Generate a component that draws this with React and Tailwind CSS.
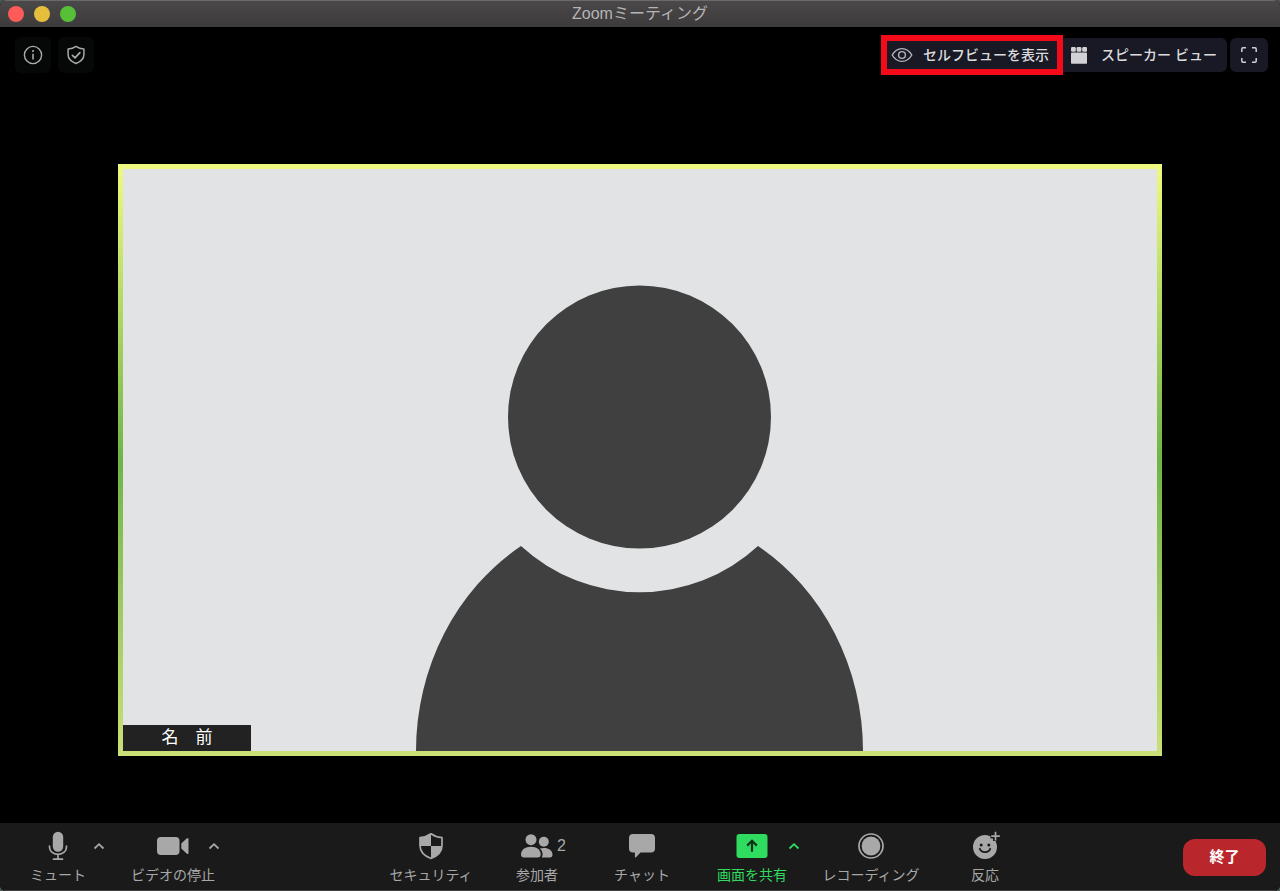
import React from "react";

const InfoIcon = () => (
    <svg width="20" height="20" viewBox="0 0 20 20" fill="none" stroke="#a9aaaa" strokeWidth="1.4" aria-hidden="true">
        <circle cx="10" cy="10" r="8.6" />
        <circle cx="10" cy="6" r="1.1" fill="#a9aaaa" stroke="none" />
        <path d="M10 8.8v5.6" strokeWidth="1.6" />
    </svg>
)

const ShieldCheckIcon = () => (
    <svg width="20" height="20" viewBox="0 0 20 20" fill="none" stroke="#a9aaaa" strokeWidth="1.5" strokeLinejoin="round" strokeLinecap="round" aria-hidden="true">
        <path d="M10 1.4C7.8 3 5.2 3.9 2.1 4v5.5c0 4.2 3.3 7.3 7.9 9 4.6-1.7 7.9-4.8 7.9-9V4C14.8 3.9 12.2 3 10 1.4z" />
        <path d="M6.4 10.3l2.6 2.5 4.9-5.2" strokeWidth="1.7" />
    </svg>
)

const EyeIcon = () => (
    <svg width="22" height="16" viewBox="0 0 22 16" fill="none" stroke="#b5b6bb" strokeWidth="1.4" aria-hidden="true">
        <path d="M1.2 8C3.6 3.8 7 1.6 11 1.6S18.400 3.8 20.8 8C18.4 12.2 15 14.4 11 14.4S3.6 12.2 1.2 8z" />
        <circle cx="11" cy="8" r="3.4" />
    </svg>
)

const SpeakerViewIcon = () => (
    <svg width="16" height="17" viewBox="0 0 16 17" fill="#d2d2d4" aria-hidden="true">
        <rect x="0" y="0" width="4.8" height="4.8" rx="1.2" />
        <rect x="5.6" y="0" width="4.8" height="4.8" rx="1.2" />
        <rect x="11.2" y="0" width="4.8" height="4.8" rx="1.2" />
        <rect x="0" y="5.6" width="16" height="11.2" rx="0.8" />
    </svg>
)

const FullscreenIcon = () => (
    <svg width="16" height="16" viewBox="0 0 16 16" fill="none" stroke="#cfcfd2" strokeWidth="1.5" aria-hidden="true">
        <path d="M0.800 5V2Q0.8 0.8 2 0.8H5M11 0.8h3q1.2 0 1.2 1.2v3M15.2 11v3q0 1.2-1.2 1.2h-3M5 15.2H2Q0.8 15.2 0.8 14v-3" />
    </svg>
)

const MicIcon = () => (
    <svg width="20" height="30" viewBox="0 0 20 30" fill="none" stroke="#a8a8a8" strokeWidth="1.7" strokeLinecap="round" aria-hidden="true">
        <rect x="4.8" y="0.8" width="10.4" height="20" rx="5.2" fill="#a8a8a8" stroke="none" />
        <path d="M1.5 15.2v0.8c0 4.2 3.4 7.3 8.5 7.3s8.500-3.1 8.5-7.3v-0.8M10 23.3v4.7M5.5 28.2h9" />
    </svg>
)

const VideoIcon = () => (
    <svg width="32" height="20" viewBox="0 0 32 20" fill="#a8a8a8" aria-hidden="true">
        <path d="M4 1h14.5a4 4 0 0 1 4 4v10a4 4 0 0 1-4 4H4a4 4 0 0 1-4-4V5a4 4 0 0 1 4-4z" />
        <path d="M24.3 7.6l5.3-5.1Q31.5 1.2 31.5 3v14q0 1.8-1.9.5l-5.3-5.1z" />
    </svg>
)

const SecurityIcon = () => (
    <svg width="26" height="28" viewBox="0 0 26 28" aria-hidden="true">
        <path d="M13 1.8C10.3 3.8 6.5 5.3 2 5.7v7.8c0 6 4.6 10.5 11 13 6.4-2.5 11-7 11-13V5.7C19.5 5.3 15.7 3.8 13 1.8z" fill="#1a1a1a" stroke="#a8a8a8" strokeWidth="1.7" strokeLinejoin="round" />
        <path d="M13 1.8C10.3 3.8 6.5 5.3 2 5.7V14h11zM13 14h11c-.3 5.8-4.8 10.1-11 12.5z" fill="#a8a8a8" />
    </svg>
)

const ParticipantsIcon = () => (
    <svg width="32" height="24" viewBox="0 0 32 24" fill="#a8a8a8" aria-hidden="true">
        <circle cx="10" cy="5.7" r="5.5" />
        <path d="M0 20.6C0 15.5 4.2 12.7 10 12.7s9.7 2.8 9.7 7.9q0 2.9-3 2.9H3Q0 23.5 0 20.6z" />
        <circle cx="22.8" cy="7.8" r="5" />
        <path d="M18.8 14.5c1.2-.4 2.5-.6 4-.6 5 0 8.7 2.2 8.7 6.9q0 2.7-2.6 2.7h-8.2q.9-1.2.9-2.9c0-2.6-1-4.7-2.8-6.1z" />
    </svg>
)

const ChatIcon = () => (
    <svg width="28" height="26" viewBox="0 0 28 26" fill="#a8a8a8" aria-hidden="true">
        <path d="M5 1h18a4 4 0 0 1 4 4v10.5a4 4 0 0 1-4 4H12.5L8 24.3q-1.1.8-1.1-.5v-4.3H5a4 4 0 0 1-4-4V5a4 4 0 0 1 4-4z" />
    </svg>
)

const ShareIcon = () => (
    <svg width="32" height="24" viewBox="0 0 32 24" fill="none" aria-hidden="true">
        <rect x="0.5" y="0" width="31" height="24" rx="3" fill="#2fdc5f" />
        <path d="M16 17.8V7M11.2 11.6L16 6.8l4.8 4.8" stroke="#12331b" strokeWidth="2.2" />
    </svg>
)

const RecordIcon = () => (
    <svg width="26" height="26" viewBox="0 0 26 26" fill="none" aria-hidden="true">
        <circle cx="13" cy="13" r="12" stroke="#a8a8a8" strokeWidth="1.7" />
        <circle cx="13" cy="13" r="9.4" fill="#a8a8a8" />
    </svg>
)

const ReactionIcon = () => (
    <svg width="30" height="30" viewBox="0 0 30 30" fill="none" aria-hidden="true">
        <circle cx="15" cy="16" r="12" fill="#a8a8a8" />
        <path d="M25.5 0v10M20.5 5h10" stroke="#1a1a1a" strokeWidth="5" />
        <path d="M25.5 0.8v8.6M21.2 5.1h8.6" stroke="#a8a8a8" strokeWidth="1.7" />
        <circle cx="11.2" cy="14" r="1.5" fill="#1a1a1a" />
        <circle cx="18.8" cy="14" r="1.5" fill="#1a1a1a" />
        <path d="M9.8 17.8c.8 2.2 2.7 3.3 5.2 3.3s4.4-1.1 5.2-3.3" stroke="#1a1a1a" strokeWidth="1.8" strokeLinecap="round" />
    </svg>
)

const Caret = ({ label, className }) => (
    <button type="button" aria-label={label} className={`flex h-[30px] w-3 shrink-0 items-center justify-center ${className}`}>
        <svg width="12" height="8" viewBox="0 0 12 8" fill="none" stroke="currentColor" strokeWidth="1.8" aria-hidden="true">
            <path d="M1.5 6.5L6 2.2l4.5 4.3" />
        </svg>
    </button>
)

const ToolButton = ({ icon, label, className }) => (
    <button type="button" className={`flex shrink-0 flex-col items-center gap-1 ${className}`}>
        <span className="flex h-[30px] items-center justify-center">{icon}</span>
        <span className="whitespace-nowrap text-sm leading-5">{label}</span>
    </button>
)

const TitleBar = () => (
    <header className="grid h-[27px] grid-cols-[1fr_auto_1fr] items-center border-t border-[#6a6a6a] bg-linear-to-b from-[#4a4849] to-[#3c3a3b] px-2">
        <div className="flex gap-[10px]">
            <button type="button" aria-label="閉じる" className="size-4 rounded-full bg-[#fc5b57]" />
            <button type="button" aria-label="しまう" className="size-4 rounded-full bg-[#e5bf3c]" />
            <button type="button" aria-label="拡大" className="size-4 rounded-full bg-[#57c038]" />
        </div>
        <h1 className="text-base leading-6 text-[#b6b4b5]">Zoomミーティング</h1>
    </header>
)

const ViewBar = () => (
    <div className="flex items-center justify-between pl-[15px] pr-3 pt-2">
        <div className="flex gap-[7px]">
            <button type="button" aria-label="情報" className="flex size-9 items-center justify-center rounded-md bg-[#060808]"><InfoIcon /></button>
            <button type="button" aria-label="暗号化" className="flex size-9 items-center justify-center rounded-md bg-[#060808]"><ShieldCheckIcon /></button>
        </div>
        <div className="flex items-center text-sm font-medium text-[#dcdcde]">
            <button type="button" className="flex h-10 items-center gap-[10px] border-6 border-[#f50a1a] bg-[#181924] pl-1 pr-2">
                <EyeIcon />
                セルフビューを表示
            </button>
            <button type="button" className="flex h-[34px] items-center gap-[14px] rounded-r-md bg-[#181924] pl-2 pr-[10px]">
                <SpeakerViewIcon />
                スピーカー ビュー
            </button>
            <button type="button" aria-label="全画面表示" className="ml-[3px] flex h-[34px] w-[38px] items-center justify-center rounded-md bg-[#181924]">
                <FullscreenIcon />
            </button>
        </div>
    </div>
)

const Stage = () => (
    <main className="flex-1 px-[118px] pb-[67px] pt-[89px]">
        <figure className="relative bg-linear-to-b from-[#f0fa80] via-[#6fb446] to-[#cbe076] p-[5px]">
            <svg viewBox="0 0 1034 582" className="block w-full bg-[#e1e3e4]" fill="#404040" role="img" aria-label="名前">
                <circle cx="516.5" cy="248" r="131.5" />
                <path d="M293 582A223.5 242 0 0 1 398 377A175 175 0 0 0 635 377A223.5 242 0 0 1 740 582z" />
            </svg>
            <figcaption className="absolute bottom-[5px] left-[5px] flex h-[26px] w-32 items-center justify-center bg-[#222222] text-[17px] text-white">
                名　前
            </figcaption>
        </figure>
    </main>
)

const Toolbar = () => (
    <nav className="flex items-start justify-between border-b border-[#3f3f3f] bg-[#1a1a1a] pb-[5px] pl-[30px] pr-[14px] pt-2 text-[#a8a8a8]">
        <div className="flex pr-[14px]">
            <ToolButton icon={<MicIcon />} label="ミュート" className="w-14" />
            <Caret label="オーディオ設定" className="ml-[7px]" />
            <ToolButton icon={<VideoIcon />} label="ビデオの停止" className="ml-[26px] w-[84px]" />
            <Caret label="ビデオ設定" className="-ml-[7px]" />
        </div>

        <div className="flex">
            <ToolButton icon={<SecurityIcon />} label="セキュリティ" className="w-[106px]" />
            <ToolButton
                icon={
                    <span className="grid grid-cols-[1fr_auto_1fr] items-center gap-1">
                        <span />
                        <ParticipantsIcon />
                        <span className="text-base leading-5">2</span>
                    </span>
                }
                label="参加者"
                className="w-[106px]"
            />
            <ToolButton icon={<ChatIcon />} label="チャット" className="w-[104px]" />
            <div className="flex pl-[22px] pr-[11px] text-[#2fdc5f]">
                <ToolButton icon={<ShareIcon />} label="画面を共有" className="w-[72px]" />
                <Caret label="共有設定" className="" />
            </div>
            <ToolButton icon={<RecordIcon />} label="レコーディング" className="w-[120px]" />
            <ToolButton icon={<ReactionIcon />} label="反応" className="w-[108px]" />
        </div>

        <button type="button" className="mt-2 h-[37px] w-[83px] shrink-0 rounded-xl bg-[#b9272c] text-[15px] font-bold text-white">終了</button>
    </nav>
)

const App = () => {
    return (
        <div className="min-h-screen bg-[#4b5655] font-['Liberation_Sans','Noto_Sans_CJK_JP',sans-serif]">
            <div className="flex min-h-screen flex-col overflow-hidden rounded-md bg-black">
                <TitleBar />
                <ViewBar />
                <Stage />
                <Toolbar />
            </div>
        </div>
    )
}

export default App
